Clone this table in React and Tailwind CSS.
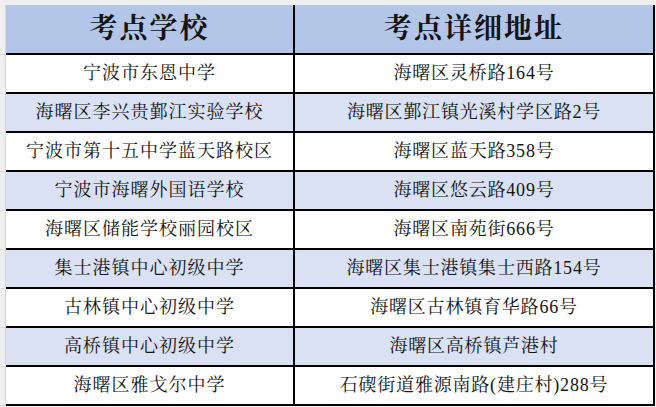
import React from "react";

const rows = [
  ["宁波市东恩中学", "海曙区灵桥路164号"],
  ["海曙区李兴贵鄞江实验学校", "海曙区鄞江镇光溪村学区路2号"],
  ["宁波市第十五中学蓝天路校区", "海曙区蓝天路358号"],
  ["宁波市海曙外国语学校", "海曙区悠云路409号"],
  ["海曙区储能学校丽园校区", "海曙区南苑街666号"],
  ["集士港镇中心初级中学", "海曙区集士港镇集士西路154号"],
  ["古林镇中心初级中学", "海曙区古林镇育华路66号"],
  ["高桥镇中心初级中学", "海曙区高桥镇芦港村"],
  ["海曙区雅戈尔中学", "石碶街道雅源南路(建庄村)288号"],
];

const font = {
  fontFamily:
    '"Liberation Serif", "Noto Serif CJK SC", "Noto Sans CJK SC", serif',
};

const App = () => {
  return (
    <div
      className="w-[656px] h-[407px] bg-[#efefef] pt-[5px] flex text-[#141414]"
      style={font}
    >
      {/* row header strip */}
      <div className="w-[6px] flex flex-col border-r border-[#d6d6d6]">
        <div className="h-[50px] border-b border-[#dcdcdc]"></div>
        {rows.map((r, i) => (
          <div key={i} className="h-[39px] border-b border-[#dcdcdc]"></div>
        ))}
      </div>

      <div className="flex flex-col">
        <div className="flex h-[50px] bg-[#b4c6e7] border-b-2 border-black">
          <div className="w-[289px] border-r-2 border-black flex items-center justify-center text-[28px] font-bold tracking-[2px]">
            考点学校
          </div>
          <div className="w-[360px] border-r-2 border-black flex items-center justify-center text-[28px] font-bold tracking-[2px]">
            考点详细地址
          </div>
        </div>
        {rows.map((r, i) => (
          <div
            key={i}
            className={
              "flex h-[39px] border-b-2 border-black " +
              (i % 2 === 1 ? "bg-[#d9e1f2]" : "bg-white")
            }
          >
            <div className="w-[289px] border-r-2 border-black flex items-center justify-center text-[18px] tracking-[1px]">
              {r[0]}
            </div>
            <div className="w-[360px] border-r-2 border-black flex items-center justify-center text-[18px] tracking-[0.8px]">
              {r[1]}
            </div>
          </div>
        ))}
      </div>
    </div>
  );
};

export default App;
